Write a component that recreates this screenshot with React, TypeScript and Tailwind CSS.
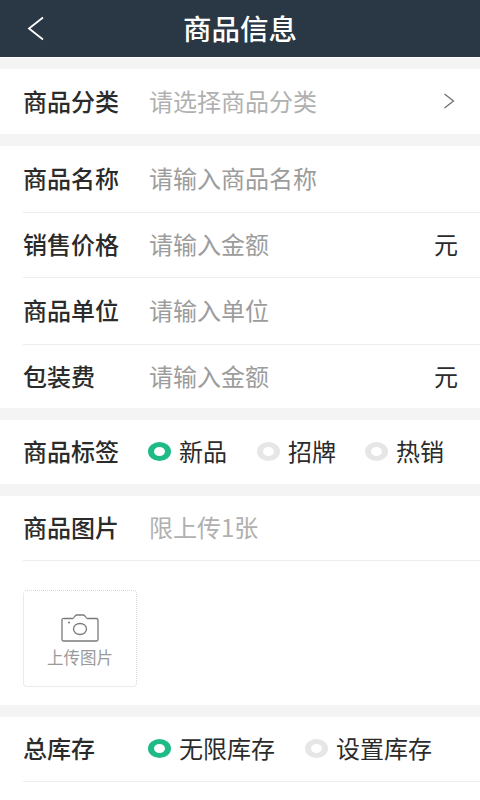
import React from "react";

const font = { fontFamily: '"Noto Sans CJK SC", "Liberation Sans", sans-serif' };

function Gap() {
  return <div className="h-3 bg-[#f4f4f4]" />;
}

function Label({ children }: { children: React.ReactNode }) {
  return <span className="w-[126px] shrink-0 text-[24px] font-medium text-[#2b2b2b]">{children}</span>;
}

function Field({ label, hint, unit, h, line = true, light }: { label: string; hint: string; unit?: string; h: string; line?: boolean; light?: boolean }) {
  return (
    <div className={`ml-[23px] flex items-center pr-[22px] pb-[2px] ${h} ${line ? "border-b border-[#ececec]" : ""}`}>
      <Label>{label}</Label>
      <span className={`flex-1 text-[24px] ${light ? "text-[#b0b0b0]" : "text-[#9c9c9c]"}`}>{hint}</span>
      {unit && <span className="text-[24px] text-[#2b2b2b]">{unit}</span>}
    </div>
  );
}

function Radio({ on, text, w }: { on?: boolean; text: string; w: string }) {
  return (
    <div className={`flex items-center ${w}`}>
      <span className={`mr-[8px] h-[19px] w-[23px] shrink-0 rounded-[50%] border-x-[6px] border-y-[5px] bg-white ${on ? "border-[#1fbb86]" : "border-[#e6e6e6]"}`} />
      <span className="text-[24px] text-[#2b2b2b]">{text}</span>
    </div>
  );
}

export default function App() {
  return (
    <div style={font} className="flex h-[800px] w-[480px] flex-col overflow-hidden bg-white leading-none">
      <header className="relative flex h-[57px] shrink-0 items-center justify-center bg-[#2a3744]">
        <svg className="absolute left-[27px] top-[16px]" width="18" height="25" viewBox="0 0 18 25" fill="none" stroke="#ffffff" strokeWidth="1.8">
          <path d="M16 1.500 2 12.500 16 23.500" />
        </svg>
        <h1 className="text-[28.500px] font-medium text-white">商品信息</h1>
      </header>
      <div className="h-px bg-white" />
      <div className="h-[11px] bg-[#f4f4f4]" />

      <div className="ml-[23px] flex h-[65px] items-center pr-[25px] pb-[2px]">
        <Label>商品分类</Label>
        <span className="flex-1 text-[24px] text-[#b0b0b0]">请选择商品分类</span>
        <svg width="12" height="16" viewBox="0 0 12 16" fill="none" stroke="#707070" strokeWidth="1.3">
          <path d="M1.500 1 10.500 8 1.500 15" />
        </svg>
      </div>
      <Gap />

      <Field label="商品名称" hint="请输入商品名称" h="h-[67px]" />
      <Field label="销售价格" hint="请输入金额" unit="元" h="h-[65px]" />
      <Field label="商品单位" hint="请输入单位" h="h-[67px]" />
      <Field label="包装费" hint="请输入金额" unit="元" h="h-[63px]" line={false} />
      <Gap />

      <div className="ml-[23px] flex h-[64px] items-center pb-[2px]">
        <Label>商品标签</Label>
        <Radio on text="新品" w="w-[109px] -ml-[1px]" />
        <Radio text="招牌" w="w-[108px]" />
        <Radio text="热销" w="w-[100px]" />
      </div>
      <Gap />

      <Field label="商品图片" hint="限上传1张" h="h-[65px]" light />

      <div className="h-[144px] pl-[23px] pt-[29px]">
        <div className="flex h-[97px] w-[114px] flex-col items-center rounded-[4px] border border-dotted border-[#d8d8d8] pt-[23px]">
          <svg width="38" height="28" viewBox="0 0 38 28" fill="none" stroke="#7a7a7a" strokeWidth="1.3" strokeLinejoin="round">
            <path d="M3 4.500h8.500c1.500 0 2-3 4-3.500h7c2 .5 2.500 3.500 4 3.500H35.500a1.500 1.500 0 0 1 1.500 1.500v19.500a1.500 1.500 0 0 1-1.500 1.500H2.500a1.500 1.500 0 0 1-1.500-1.500V6a1.500 1.500 0 0 1 2-1.500Z" />
            <ellipse cx="19" cy="15" rx="6.500" ry="5.500" />
            <path d="M7 8.500h2" />
          </svg>
          <span className="mt-[7px] text-[16.500px] text-[#9a9a9a]">上传图片</span>
        </div>
      </div>
      <Gap />

      <div className="ml-[23px] flex h-[65px] items-center border-b border-[#ececec] pb-[2px]">
        <Label>总库存</Label>
        <Radio on text="无限库存" w="w-[157px] -ml-[1px]" />
        <Radio text="设置库存" w="w-[140px]" />
      </div>
    </div>
  );
}
